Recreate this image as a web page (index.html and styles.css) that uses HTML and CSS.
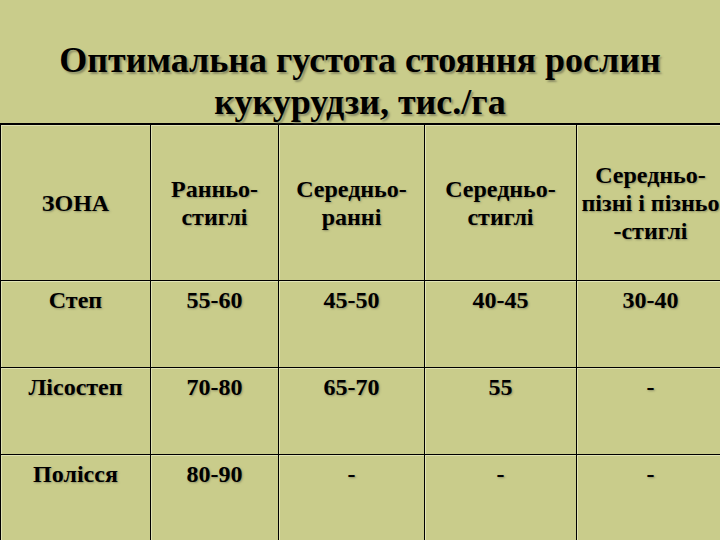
FILE: index.html
```html
<!DOCTYPE html>
<html lang="uk">
<head>
<meta charset="utf-8">
<title>Оптимальна густота стояння рослин кукурудзи</title>
<link rel="stylesheet" href="styles.css">
</head>
<body>
<div class="slide">
  <h1 class="title">Оптимальна густота стояння рослин<br>кукурудзи, тис./га</h1>
  <table class="grid">
    <colgroup>
      <col class="c1"><col class="c2"><col class="c3"><col class="c4"><col class="c5">
    </colgroup>
    <tr class="head">
      <td>ЗОНА</td>
      <td>Ранньо-<br>стиглі</td>
      <td>Середньо-<br>ранні</td>
      <td>Середньо-<br>стиглі</td>
      <td>Середньо-<br>пізні і пізньо<br>-стиглі</td>
    </tr>
    <tr class="row">
      <td>Степ</td><td>55-60</td><td>45-50</td><td>40-45</td><td>30-40</td>
    </tr>
    <tr class="row">
      <td>Лісостеп</td><td>70-80</td><td>65-70</td><td>55</td><td>-</td>
    </tr>
    <tr class="row">
      <td>Полісся</td><td>80-90</td><td>-</td><td>-</td><td>-</td>
    </tr>
  </table>
</div>
</body>
</html>
```
FILE: styles.css
```css
html, body {
  margin: 0;
  padding: 0;
  background: #c9cc8b;
}
body {
  width: 720px;
  height: 540px;
  overflow: hidden;
  font-family: "Times New Roman", Tinos, "Liberation Serif", "Nimbus Roman", "Nimbus Roman No9 L", "Noto Serif", FreeSerif, "DejaVu Serif", Times, serif;
  color: #000;
}
.slide {
  width: 720px;
  height: 540px;
  overflow: hidden;
}
.title {
  margin: 0;
  padding-top: 39px;
  font-size: 36px;
  line-height: 42px;
  font-weight: bold;
  text-align: center;
  text-shadow: 2px 2px 2px rgba(90, 90, 70, 0.55);
}
.grid {
  border-collapse: collapse;
  table-layout: fixed;
  width: 724px;
  font-family: inherit;
}
.c1 { width: 150px; }
.c2 { width: 128px; }
.c3 { width: 146px; }
.c4 { width: 152px; }
.c5 { width: 148px; }
.grid td {
  border: 1px solid #000;
  padding: 0;
  text-align: center;
  font-family: inherit;
  font-size: 24px;
  line-height: 28px;
  font-weight: bold;
  text-shadow: 1px 1px 2px rgba(90, 90, 70, 0.5);
  box-shadow: inset 1px 1px 0 rgba(235, 238, 200, 0.7);
}
.grid tr:first-child td {
  border-top: 2px solid #000;
}
.head td {
  height: 155px;
  vertical-align: middle;
}
.row td {
  height: 81px;
  padding-top: 5px;
  vertical-align: top;
}
```
